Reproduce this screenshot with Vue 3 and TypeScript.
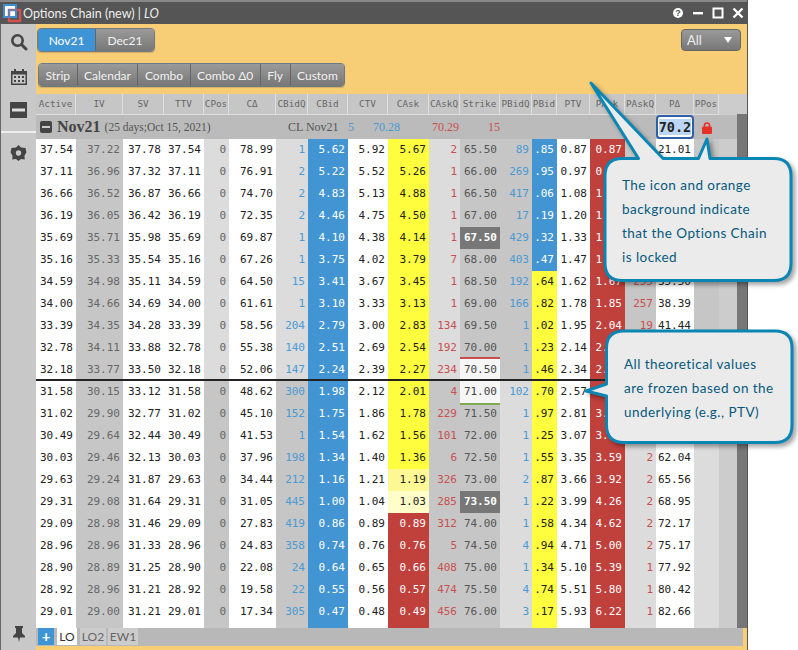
<script setup lang="ts">
const cols = [
  { name: "Active", w: 40 },
  { name: "IV", w: 47 },
  { name: "SV", w: 41 },
  { name: "TTV", w: 40 },
  { name: "CPos", w: 25 },
  { name: "CΔ", w: 47 },
  { name: "CBidQ", w: 32 },
  { name: "CBid", w: 40 },
  { name: "CTV", w: 40 },
  { name: "CAsk", w: 41 },
  { name: "CAskQ", w: 31 },
  { name: "Strike", w: 40 },
  { name: "PBidQ", w: 32 },
  { name: "PBid", w: 25 },
  { name: "PTV", w: 33 },
  { name: "PAsk", w: 35 },
  { name: "PAskQ", w: 31 },
  { name: "PΔ", w: 38 },
  { name: "PPos", w: 25 },
];
const gridTemplate = cols.map((c) => c.w + "px").join(" ") + " 18px";

// "-" = sits behind a callout in the screenshot, nothing to show
const raw = `37.54 37.22 37.78 37.54 0 78.99 1 5.62 5.92 5.67 2 65.50 89 .85 0.87 0.87 - 21.01
37.11 36.96 37.32 37.11 0 76.91 2 5.22 5.52 5.26 1 66.00 269 .95 0.97 0.97 - -
36.66 36.52 36.87 36.66 0 74.70 2 4.83 5.13 4.88 1 66.50 417 .06 1.08 1.08 - -
36.19 36.05 36.42 36.19 0 72.35 2 4.46 4.75 4.50 1 67.00 17 .19 1.20 1.20 - -
35.69 35.71 35.98 35.69 0 69.87 1 4.10 4.38 4.14 1 67.50 429 .32 1.33 1.33 - -
35.16 35.33 35.54 35.16 0 67.26 1 3.75 4.02 3.79 7 68.00 403 .47 1.47 1.47 - -
34.59 34.98 35.11 34.59 0 64.50 15 3.41 3.67 3.45 1 68.50 192 .64 1.62 1.67 255 35.50
34.00 34.66 34.69 34.00 0 61.61 1 3.10 3.33 3.13 1 69.00 166 .82 1.78 1.85 257 38.39
33.39 34.35 34.28 33.39 0 58.56 204 2.79 3.00 2.83 134 69.50 1 .02 1.95 2.04 19 41.44
32.78 34.11 33.88 32.78 0 55.38 140 2.51 2.69 2.54 192 70.00 1 .23 2.14 2.24 - -
32.18 33.77 33.50 32.18 0 52.06 147 2.24 2.39 2.27 234 70.50 1 .46 2.34 2.46 - -
31.58 30.15 33.12 31.58 0 48.62 300 1.98 2.12 2.01 4 71.00 102 .70 2.57 2.70 - -
31.02 29.90 32.77 31.02 0 45.10 152 1.75 1.86 1.78 229 71.50 1 .97 2.81 3.00 - -
30.49 29.64 32.44 30.49 0 41.53 1 1.54 1.62 1.56 101 72.00 1 .25 3.07 3.28 - -
30.03 29.46 32.13 30.03 0 37.96 198 1.34 1.40 1.36 6 72.50 1 .55 3.35 3.59 2 62.04
29.63 29.24 31.87 29.63 0 34.44 212 1.16 1.21 1.19 326 73.00 2 .87 3.66 3.92 2 65.56
29.31 29.08 31.64 29.31 0 31.05 445 1.00 1.04 1.03 285 73.50 1 .22 3.99 4.26 2 68.95
29.09 28.98 31.46 29.09 0 27.83 419 0.86 0.89 0.89 312 74.00 1 .58 4.34 4.62 2 72.17
28.96 28.96 31.33 28.96 0 24.83 358 0.74 0.76 0.76 5 74.50 4 .94 4.71 5.00 2 75.17
28.90 28.89 31.25 28.90 0 22.08 24 0.64 0.65 0.66 408 75.00 1 .34 5.10 5.39 1 77.92
28.92 28.96 31.21 28.92 0 19.58 22 0.55 0.56 0.57 474 75.50 4 .74 5.51 5.80 1 80.42
29.01 29.00 31.21 29.01 0 17.34 305 0.47 0.48 0.49 456 76.00 3 .17 5.93 6.22 1 82.66`;

const rows = raw
  .split("\n")
  .map((l) => [...l.split(" ").map((v) => (v === "-" ? "" : v)), "", ""]);
const ATM = 11; // first row under the black line

function cellClass(c: number, r: number, row: string[]) {
  const above = r < ATM;
  const out: string[] = [];
  switch (c) {
    case 0:
    case 2:
    case 3:
    case 5:
    case 8:
    case 14:
    case 17:
      out.push("white");
      break;
    case 1:
      out.push("dark", "dim");
      break;
    case 4:
      out.push(above ? "light" : "dark", "dim");
      break;
    case 6:
      out.push(above ? "light" : "dark", "qb");
      break;
    case 7:
      out.push("blue");
      break;
    case 9:
      if (r < 15) out.push("yellow");
      else if (r === 15) out.push("yellow2");
      else if (r === 16) out.push("yellow3");
      else out.push("red");
      break;
    case 10:
      out.push(above ? "light" : "dark", "qr");
      break;
    case 11:
      out.push("dark", "strike");
      if (row[11] === "70.50" || row[11] === "71.00") out.push("near");
      if (row[11] === "67.50" || row[11] === "73.50") out.push("hl");
      if (row[11] === "70.00") out.push("red-line");
      if (row[11] === "71.50") out.push("green-line");
      break;
    case 12:
      out.push(above ? "dark" : "light", "qb");
      break;
    case 13:
      out.push(r < 6 ? "blue" : "yellow");
      break;
    case 15:
      out.push("red");
      break;
    case 16:
      out.push(above ? "dark" : "light", "qr");
      break;
    case 18:
      out.push(above ? "dark" : "light");
      break;
    default:
      out.push("rest");
  }
  return out;
}

const expiries = ["Nov21", "Dec21"];
const strategies = ["Strip", "Calendar", "Combo", "Combo Δ0", "Fly", "Custom"];
</script>

<template>
  <div class="page">
    <div class="win">
      <div class="title">
        <svg class="logo" width="20" height="20" viewBox="0 0 20 20">
          <rect x="1" y="1" width="12" height="12" fill="#fff" stroke="#3d8fd0" stroke-width="2" />
          <rect x="6" y="6" width="11" height="11" fill="none" stroke="#d5504a" stroke-width="2.4" />
          <rect x="6" y="6" width="7" height="7" fill="none" stroke="#3d8fd0" stroke-width="1.4" />
        </svg>
        <span class="title-text">Options Chain (new) | <i>LO</i></span>
        <div class="win-btns">
          <svg width="12" height="12" viewBox="0 0 12 12">
            <circle cx="6" cy="6" r="5" fill="#fff" />
            <text x="6" y="9.2" text-anchor="middle" font-size="9" font-weight="700" font-family="Liberation Sans, sans-serif" fill="#555">?</text>
          </svg>
          <svg width="12" height="12" viewBox="0 0 12 12"><rect x="1" y="5" width="10" height="2.4" fill="#fff" /></svg>
          <svg width="12" height="12" viewBox="0 0 12 12"><rect x="1.5" y="1.5" width="9" height="9" fill="none" stroke="#fff" stroke-width="2" /></svg>
          <svg width="12" height="12" viewBox="0 0 12 12"><path d="M1.5 1.5 10.5 10.5M10.5 1.5 1.5 10.5" stroke="#fff" stroke-width="2.4" /></svg>
        </div>
      </div>

      <div class="body">
        <aside class="side">
          <svg class="s-search" width="18" height="18" viewBox="0 0 18 18">
            <circle cx="7.5" cy="7.5" r="5.2" fill="none" stroke="#444" stroke-width="2.6" />
            <path d="M11.5 11.5 16 16" stroke="#444" stroke-width="3" stroke-linecap="round" />
          </svg>
          <svg class="s-cal" width="18" height="18" viewBox="0 0 18 18">
            <path d="M1 3h3V1h2v2h6V1h2v2h3v14H1z" fill="#444" />
            <rect x="2.5" y="6.5" width="13" height="9" fill="#c8c8c8" />
            <path d="M4 8h2v2H4zM8 8h2v2H8zM12 8h2v2h-2zM4 12h2v2H4zM8 12h2v2H8zM12 12h2v2h-2z" fill="#444" />
          </svg>
          <svg class="s-minus" width="17" height="16" viewBox="0 0 17 16">
            <rect width="17" height="16" fill="#444" />
            <rect x="2" y="6.5" width="13" height="3" fill="#ddd" />
          </svg>
          <div class="s-sep"></div>
          <svg class="s-gear" width="17" height="16" viewBox="0 0 17 16">
            <path d="M8.5 0 11 2.6l4.5.4.9 4.3-2 3.6 .4 3.6-3.8-.4-2.5 1.9-2.5-1.9-3.8.4.4-3.6-2-3.6.9-4.3L6 2.6z" fill="#444" />
            <circle cx="8.5" cy="8" r="2.7" fill="#c8c8c8" />
          </svg>
          <svg class="s-pin" width="14" height="16" viewBox="0 0 14 16">
            <path d="M3 0h8v1.5L10 2.5V7l3 3v1.5H8L7 16l-1-4.500H1V10l3-3V2.500L3 1.500z" fill="#444" />
          </svg>
        </aside>

        <main class="main">
          <div class="toolbar">
            <div class="tool-top">
              <div class="seg">
                <button v-for="(e, i) in expiries" :key="e" class="seg-btn" :class="{ on: i === 0, exp: true }">{{ e }}</button>
              </div>
              <div class="select">All<span class="arrow"></span></div>
            </div>
            <div class="seg seg2">
              <button v-for="s in strategies" :key="s" class="seg-btn">{{ s }}</button>
            </div>
          </div>

          <div class="table-wrap">
            <div class="table">
              <div class="head" :style="{ gridTemplateColumns: gridTemplate }">
                <div v-for="c in cols" :key="c.name" class="hcell">{{ c.name }}</div>
              </div>
              <div class="group" :style="{ gridTemplateColumns: gridTemplate }">
                <div class="g-name">
                  <span class="g-minus"></span><b>Nov21</b><small>(25 days;Oct 15, 2021)</small>
                </div>
                <div class="g-cl">CL Nov21</div>
                <div class="g-prices"><span>5</span><span>70.28</span></div>
                <div class="g-ask">70.29</div>
                <div class="g-askq">15</div>
                <div class="g-input"><span>70.2</span></div>
                <div class="g-lock">
                  <svg width="10" height="12" viewBox="0 0 10 12">
                    <path d="M2.500 5V3.500a2.500 2.500 0 0 1 5 0V5" fill="none" stroke="#e8302a" stroke-width="1.6" />
                    <rect y="4.600" width="10" height="7.400" rx="1.200" fill="#e8302a" />
                  </svg>
                </div>
              </div>
              <div
                v-for="(row, r) in rows"
                :key="r"
                class="row"
                :class="{ atm: r === ATM - 1 }"
                :style="{ gridTemplateColumns: gridTemplate }"
              >
                <div v-for="(v, c) in row" :key="c" class="cell" :class="cellClass(c, r, row)">{{ v }}</div>
              </div>
              <div class="row filler" :style="{ gridTemplateColumns: gridTemplate }">
                <div v-for="(c, i) in cols" :key="c.name" class="cell" :class="cellClass(i, 21, [])"></div>
                <div class="cell rest"></div>
              </div>
            </div>
            <div class="scroll"><div class="thumb"></div></div>
          </div>

          <div class="tabs">
            <div class="tab-add">+</div>
            <div class="tab active">LO</div>
            <div class="tab t-lo2">LO2</div>
            <div class="tab t-ew1">EW1</div>
          </div>
        </main>
      </div>
    </div>

    <svg class="bubbles" width="798" height="650" viewBox="0 0 798 650">
      <path
        class="bubble"
        d="M622 158.500H638.500L591 83L663 158.500H698.500L707 139L710 158.500H774Q791 158.500 791 176V263Q791 280.500 774 280.500H622Q605 280.500 605 263V176Q605 158.500 622 158.500Z"
      />
      <path
        class="bubble"
        d="M624 331H775Q792 331 792 348V425Q792 442.500 775 442.500H624Q606.500 442.500 606.500 425V396L586 391L606.500 384V348Q606.500 331 624 331Z"
      />
    </svg>
    <div class="note note1">
      <div>The icon and orange</div>
      <div>background indicate</div>
      <div>that the Options Chain</div>
      <div>is locked</div>
    </div>
    <div class="note note2">
      <div>All theoretical values</div>
      <div>are frozen based on the</div>
      <div>underlying (e.g., PTV)</div>
    </div>
  </div>
</template>

<style>
html,
body {
  margin: 0;
  background: #fff;
}
</style>

<style scoped>
.page {
  position: relative;
  width: 798px;
  height: 650px;
  overflow: hidden;
  background: #fff;
  font-family: Lato, "Open Sans", sans-serif;
}
.win {
  width: 748px;
  height: 650px;
  display: flex;
  flex-direction: column;
  box-sizing: border-box;
  border-right: 1px solid #555;
}
.title {
  height: 24px;
  box-sizing: border-box;
  border-top: 2px solid #888;
  background: #555;
  display: flex;
  align-items: center;
  color: #eee;
  flex: none;
}
.logo {
  margin: 1px 0 0 3px;
}
.title-text {
  font-size: 12.500px;
}
.win-btns {
  margin-left: auto;
  margin-right: 3px;
  display: flex;
  gap: 8px;
}
.body {
  flex: 1;
  display: flex;
  min-height: 0;
}
.side {
  width: 36px;
  flex: none;
  box-sizing: border-box;
  background: #c8c8c8;
  border-left: 1px solid #666;
  display: flex;
  flex-direction: column;
  align-items: center;
}
.side svg {
  flex: none;
}
.s-search {
  margin-top: 9px;
}
.s-cal {
  margin-top: 17px;
}
.s-minus {
  margin-top: 16px;
}
.s-sep {
  width: 100%;
  height: 2px;
  background: #eee;
  margin-top: 13px;
  flex: none;
}
.s-gear {
  margin-top: 12px;
}
.s-pin {
  margin-top: auto;
  margin-bottom: 8px;
}
.main {
  flex: 1;
  min-width: 0;
  background: #f7cd75;
  display: flex;
  flex-direction: column;
}
.toolbar {
  height: 70px;
  flex: none;
  box-sizing: border-box;
  padding: 4px 6px 0 1px;
}
.tool-top {
  display: flex;
  justify-content: space-between;
  align-items: flex-start;
}
.seg {
  display: inline-flex;
  height: 24px;
  border: 1px solid #6e7a86;
  border-radius: 4px;
  overflow: hidden;
  box-sizing: border-box;
  box-shadow: 0 1px 1px rgba(0, 0, 0, 0.15);
}
.seg2 {
  margin: 11px 0 0 1px;
}
.seg-btn {
  border: 0;
  border-right: 1px solid #666;
  margin: 0;
  padding: 0 6.500px;
  font: 12px Lato, sans-serif;
  color: #f2f2f2;
  background: linear-gradient(#9a9a9a, #777);
}
.seg-btn:last-child {
  border-right: 0;
}
.seg-btn.exp {
  width: 58px;
  padding: 0;
}
.seg-btn.on {
  background: #3f94d6;
  color: #fff;
}
.select {
  position: relative;
  width: 60px;
  height: 22px;
  margin-top: 1px;
  box-sizing: border-box;
  padding-left: 5px;
  border: 1px solid #666;
  border-radius: 4px;
  background: linear-gradient(#9a9a9a, #777);
  color: #eee;
  font-size: 13px;
  line-height: 20px;
}
.arrow {
  position: absolute;
  right: 8px;
  top: 7px;
  border-left: 4px solid transparent;
  border-right: 4px solid transparent;
  border-top: 6px solid #fff;
}
.table-wrap {
  display: flex;
  height: 534px;
  flex: none;
}
.table {
  width: 701px;
  flex: none;
  background: #c8c8c8;
}
.head {
  display: grid;
  height: 21px;
  background: #ccc;
}
.hcell {
  background: #c6c6c6;
  border-right: 1px solid #dedede;
  border-bottom: 1px solid #dedede;
  font: 9.300px/20px "DejaVu Sans Mono", monospace;
  color: #666;
  text-align: center;
  white-space: nowrap;
  overflow: hidden;
}
.group {
  display: grid;
  height: 24px;
  background: #bbb;
  align-items: center;
  font-family: "Liberation Serif", serif;
  font-size: 12px;
  color: #555;
}
.g-name {
  grid-column: 1 / 7;
  display: flex;
  align-items: center;
  padding-left: 4px;
  white-space: nowrap;
}
.g-name b {
  font-size: 16px;
  margin-left: 5px;
  color: #444;
}
.g-name small {
  font-size: 11.500px;
  margin-left: 4px;
}
.g-minus {
  width: 12px;
  height: 12px;
  border-radius: 2px;
  background: linear-gradient(#ccc, #ccc) center / 8px 2px no-repeat #444;
}
.g-cl {
  grid-column: 7 / 9;
  padding-left: 12px;
  white-space: nowrap;
}
.g-prices {
  grid-column: 9 / 11;
  display: flex;
  gap: 19px;
  color: #4a9ad4;
}
.g-ask {
  grid-column: 11 / 12;
  color: #c9504e;
  padding-left: 3px;
}
.g-askq {
  grid-column: 12 / 13;
  color: #c9504e;
  text-align: right;
}
.g-input {
  grid-column: 18 / 19;
  height: 24px;
  box-sizing: border-box;
  border: 2px solid #2f5fa8;
  border-radius: 4px;
  background: #fff;
  font: 700 13.500px/20px "DejaVu Sans Mono", monospace;
  color: #222;
  text-align: center;
}
.g-input span {
  background: #bcd7f5;
}
.g-lock {
  grid-column: 19 / 20;
  display: flex;
  justify-content: center;
  padding-top: 1px;
}
.row {
  display: grid;
  height: 22px;
  position: relative;
}
.row.filler {
  height: 5px;
}
.row.atm::after {
  content: "";
  position: absolute;
  left: 0;
  right: 0;
  bottom: 0;
  height: 2px;
  background: #222;
}
.cell {
  font: 11px/22px "DejaVu Sans Mono", monospace;
  text-align: right;
  padding-right: 3px;
  color: #222;
  box-sizing: border-box;
  overflow: hidden;
  white-space: nowrap;
}
.white {
  background: #fff;
}
.dark {
  background: #c6c6c6;
}
.light {
  background: #dcdcdc;
}
.rest {
  background: #ccc;
}
.dim {
  color: #666;
}
.qb {
  color: #4a9ad4;
}
.qr {
  color: #c9504e;
}
.blue {
  background: #4295d2;
  color: #fff;
}
.red {
  background: #c0403c;
  color: #fff;
}
.yellow {
  background: #fefe3f;
}
.yellow2 {
  background: #fdf893;
}
.yellow3 {
  background: #fffdc8;
}
.strike {
  color: #555;
}
.near {
  background: #f6f6f6;
  color: #444;
}
.hl {
  background: #777;
  color: #fff;
  font-weight: 700;
}
.red-line {
  box-shadow: inset 0 -2px 0 #c9504e;
}
.green-line {
  box-shadow: inset 0 2px 0 #7cab52;
}
.scroll {
  width: 10px;
  flex: none;
  background: #ccc;
  padding-top: 20px;
  box-sizing: border-box;
}
.thumb {
  height: 100%;
  background: #777;
}
.tabs {
  width: 707px;
  height: 18px;
  flex: none;
  background: #b8b8b8;
  display: flex;
  padding-left: 2px;
  box-sizing: border-box;
  font-size: 12px;
  line-height: 17px;
}
.tab-add {
  width: 16px;
  height: 17px;
  background: #3f94d6;
  color: #fff;
  font-weight: 700;
  font-size: 15px;
  text-align: center;
  line-height: 16px;
}
.tab {
  height: 17px;
  text-align: center;
  color: #666;
  background: #ccc;
}
.tab.active {
  width: 20px;
  margin-left: 3px;
  background: #fff;
  color: #333;
}
.t-lo2 {
  width: 26px;
  margin-left: 3px;
}
.t-ew1 {
  width: 30px;
  margin-left: 2px;
}
.bubbles {
  position: absolute;
  left: 0;
  top: 0;
  filter: drop-shadow(3px 3px 2px rgba(0, 0, 0, 0.35));
}
.bubble {
  fill: #ebebeb;
  stroke: #0a86b5;
  stroke-width: 3;
  stroke-linejoin: round;
}
.note {
  position: absolute;
  color: #06597c;
  font-size: 13.500px;
  line-height: 24px;
  letter-spacing: 0.45px;
  white-space: nowrap;
}
.note1 {
  left: 622px;
  top: 173px;
}
.note2 {
  left: 624px;
  top: 352px;
}
</style>
